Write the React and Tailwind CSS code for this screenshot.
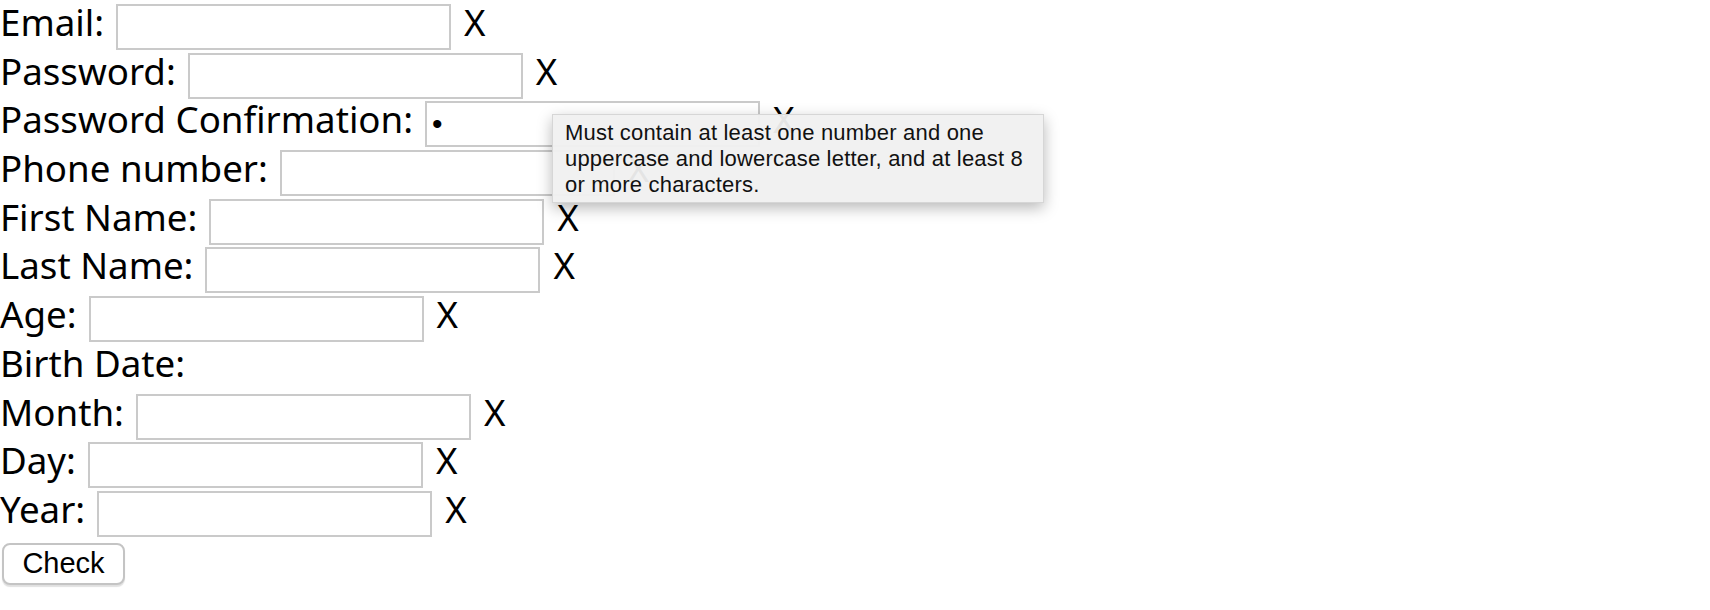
import React from 'react';

// Campos do formulário, na ordem do ecrã
const fields = [
  { label: 'Email:', type: 'text' },
  { label: 'Password:', type: 'password' },
  { label: 'Password Confirmation:', type: 'password', value: 'a' },
  { label: 'Phone number:', type: 'text' },
  { label: 'First Name:', type: 'text' },
  { label: 'Last Name:', type: 'text' },
  { label: 'Age:', type: 'text' },
  { label: 'Birth Date:', heading: true },
  { label: 'Month:', type: 'text' },
  { label: 'Day:', type: 'text' },
  { label: 'Year:', type: 'text' },
];

const FieldRow = ({ label, type, value, heading }) => (
  <div className="flex items-start h-[48.7px] leading-[44.7px]">
    <span className="whitespace-nowrap">{label}</span>
    {!heading && (
      <>
        <input
          type={type}
          defaultValue={value}
          readOnly={!!value}
          className="ml-[12px] mt-[4px] w-[335px] h-[46px] shrink-0 border-2 border-[#cacaca] bg-white pl-[5px] text-[30px] leading-none outline-none font-['Liberation_Sans',sans-serif]"
        />
        <span className="ml-[13px]">X</span>
      </>
    )}
  </div>
);

export default function App() {
  return (
    <div className="relative w-[1710px] h-[610px] bg-white text-black text-[36.7px] font-['Noto_Sans',sans-serif] overflow-hidden">
      <form className="flex flex-col" onSubmit={(e) => e.preventDefault()}>
        {fields.map((f) => (
          <FieldRow key={f.label} {...f} />
        ))}
        <div className="flex items-start h-[48.7px]">
          <button
            type="submit"
            className="ml-[2px] mt-[7px] w-[123px] h-[42px] rounded-[8px] border-2 border-[#c4c4c4] bg-white shadow-[0_2px_1px_rgba(0,0,0,0.12)] text-[29px] leading-none font-['Liberation_Sans',sans-serif]"
          >
            Check
          </button>
        </div>
      </form>

      {/* tooltip de validação do browser */}
      <div className="absolute left-[552px] top-[114px] w-[492px] h-[89px] bg-[#f0f0f0]/95 border border-[#d6d6d6] shadow-[0_5px_14px_rgba(0,0,0,0.28)] pt-[5px] pl-[12px] text-[22px] leading-[26px] tracking-[0.2px] text-[#111] font-['Liberation_Sans',sans-serif]">
        Must contain at least one number and one
        <br />
        uppercase and lowercase letter, and at least 8
        <br />
        or more characters.
      </div>
    </div>
  );
}
